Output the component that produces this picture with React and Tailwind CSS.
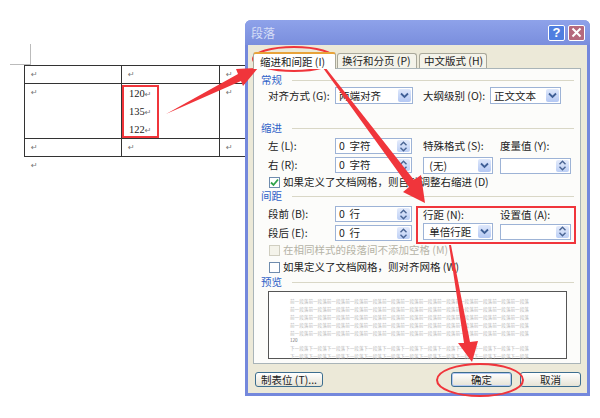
import React from "react";

function Heading({ children, className = "" }) {
  return (
    <div className={"flex items-center h-[14px] pl-[7px] pr-[6px] gap-[10px] text-[10.5px] leading-[14px] text-[#2f62c8] " + className}>
      <span className="whitespace-nowrap">{children}</span>
      <div className="flex-1 h-px bg-[#d9d7c6]" />
    </div>
  );
}

function Label({ children, w = "w-[67px]", className = "" }) {
  return <div className={"shrink-0 whitespace-nowrap text-[10.5px] leading-[14px] text-[#222] " + w + " " + className}>{children}</div>;
}

function Chevron() {
  return (
    <svg width="9" height="7" viewBox="0 0 9 7">
      <path d="M1 1.5 L4.5 5 L8 1.5" fill="none" stroke="#3f5f96" strokeWidth="1.8" />
    </svg>
  );
}

function Select({ text, w }) {
  return (
    <div className={"flex items-stretch h-[17px] bg-white border border-[#9db3d6] p-px shrink-0 " + w}>
      <div className="flex-1 pl-[2px] text-[10.5px] leading-[13px] text-[#222] whitespace-pre">{text}</div>
      <div className="w-[13px] flex items-center justify-center bg-gradient-to-b from-[#dfe8fb] to-[#b4c8f3] rounded-[2px]">
        <Chevron />
      </div>
    </div>
  );
}

function Spin({ text, w }) {
  return (
    <div className={"flex items-stretch h-[16px] bg-white border border-[#9db3d6] p-px shrink-0 " + w}>
      <div className="flex-1 pl-[2px] text-[10.5px] leading-[12px] text-[#222] whitespace-pre">{text}</div>
      <div className="w-[13px] flex flex-col items-center justify-center bg-gradient-to-b from-[#e4ebfb] to-[#bccff5] rounded-[2px]">
        <svg width="9" height="11" viewBox="0 0 9 11">
          <path d="M1.5 4.2 L4.5 1.2 L7.5 4.2 M1.5 6.8 L4.5 9.8 L7.5 6.8" fill="none" stroke="#4a6594" strokeWidth="1.4" />
        </svg>
      </div>
    </div>
  );
}

function Check({ checked, disabled, children, className = "" }) {
  return (
    <div className={"flex items-center h-[14px] pl-[15px] gap-[3px] " + className}>
      <div className={"w-[11px] h-[11px] border flex items-center justify-center shrink-0 " + (disabled ? "border-[#d0cec0] bg-[#f4f3ea]" : "border-[#6f8cae] bg-white")}>
        {checked && (
          <svg width="9" height="9" viewBox="0 0 9 9">
            <path d="M1 4.5 L3.5 7 L8 1.5" fill="none" stroke="#2fa24a" strokeWidth="1.8" />
          </svg>
        )}
      </div>
      <span className={"text-[10.5px] leading-[14px] whitespace-nowrap " + (disabled ? "text-[#b5b3a6]" : "text-[#222]")}>{children}</span>
    </div>
  );
}

function Mark() {
  return <span className="text-[8px] leading-none text-[#777] font-['DejaVu_Sans',sans-serif]">↵</span>;
}

function Cell({ children, className = "" }) {
  return <div className={"border-r border-b border-[#333] pl-[6px] pt-[4px] leading-[8px] text-[8px] " + className}>{children}</div>;
}

const before = "前一段落".repeat(13);
const after = "下一段落".repeat(13);

function PreviewLine({ text }) {
  return <div className="h-[8px] leading-[8px] text-[4.6px] text-[#b9b9b9] whitespace-nowrap">{text}</div>;
}

function Btn({ children, w, className = "" }) {
  return (
    <button className={"h-[15px] rounded-[3px] border border-[#3c6e8f] bg-gradient-to-b from-white to-[#e6e3d6] text-[10.5px] leading-[13px] text-[#222] whitespace-pre " + w + " " + className}>
      {children}
    </button>
  );
}

export default function App() {
  return (
    <div className="relative w-[600px] h-[418px] bg-white overflow-hidden font-['Noto_Sans_CJK_SC','Liberation_Sans',sans-serif]">
      {/* document */}
      <div className="pt-[65px] pl-[24px] relative">
        <div className="absolute left-[30px] top-[44px] w-px h-[21px] bg-[#bbb]" />
        <div className="absolute left-[10px] top-[64px] w-[20px] h-px bg-[#bbb]" />
        <div className="grid grid-cols-[97px_98px_60px] grid-rows-[18px_55px_18px] w-[255px] border-t border-l border-[#333]">
          <Cell><Mark /></Cell>
          <Cell><Mark /></Cell>
          <Cell><Mark /></Cell>
          <Cell><Mark /></Cell>
          <Cell className="!pt-0 !pl-0">
            <div className="relative flex flex-col font-['Liberation_Serif',serif] text-[10.5px] text-[#222] pl-[7px] pt-[1px]">
              <div className="h-[18px] leading-[18px]">120<Mark /></div>
              <div className="h-[18px] leading-[18px]">135<Mark /></div>
              <div className="h-[18px] leading-[18px]">122<Mark /></div>
              <div className="absolute left-0 top-[1px] w-[37px] h-[53px] border-2 border-[#f0353b]" />
            </div>
          </Cell>
          <Cell><Mark /></Cell>
          <Cell><Mark /></Cell>
          <Cell><Mark /></Cell>
          <Cell><Mark /></Cell>
        </div>
        <div className="pl-[7px] pt-[4px] leading-[8px] text-[8px]"><Mark /></div>
      </div>

      {/* dialog window */}
      <div className="absolute left-[245px] top-[20px] w-[345px] h-[376px] flex flex-col bg-[#ece9d8] border-x-[3px] border-b-[3px] border-[#7488dc] rounded-t-[6px]">
        <div className="h-[25px] -mx-[3px] flex items-center pl-[6px] pr-[5px] rounded-t-[6px] bg-gradient-to-b from-[#8ea2ea] to-[#7a8edd]">
          <span className="flex-1 text-[12px] text-[#d5ddf6]">段落</span>
          <div className="w-[17px] h-[16px] rounded-[2px] border border-white bg-[#4f7ee0] text-white text-[13px] leading-[14px] text-center font-['Liberation_Sans',sans-serif] font-bold">?</div>
          <div className="w-[17px] h-[16px] ml-[3px] rounded-[2px] border border-white bg-[#b5697d] flex items-center justify-center">
            <svg width="11" height="11" viewBox="0 0 11 11"><path d="M1.5 1.5 L9.5 9.5 M9.5 1.5 L1.5 9.5" stroke="#fff" strokeWidth="2" /></svg>
          </div>
        </div>

        {/* tabs */}
        <div className="flex items-end pl-[5px] pt-[7px] h-[23px] gap-[1px] text-[10.5px] text-[#222]">
          <div className="relative z-10 w-[83px] h-[17px] -mb-px bg-white border-x border-[#a9a89a] border-t-2 border-t-[#e8a33a] rounded-t-[3px] pl-[6px] leading-[15px] whitespace-nowrap">缩进和间距 (I)</div>
          <div className="w-[80px] h-[15px] bg-[#f4f3ea] border-x border-t border-[#a9a89a] rounded-t-[3px] pl-[4px] leading-[14px] whitespace-nowrap">换行和分页 (P)</div>
          <div className="w-[68px] h-[15px] ml-[1px] bg-[#f4f3ea] border-x border-t border-[#a9a89a] rounded-t-[3px] pl-[4px] leading-[14px] whitespace-nowrap">中文版式 (H)</div>
        </div>

        {/* panel */}
        <div className="ml-[5px] w-[328px] h-[296px] bg-[#fcfcfa] border border-[#a9b4b8] pt-[4px] relative">
          <Heading>常规</Heading>
          <div className="flex items-center pl-[14px]">
            <Label>对齐方式 (G):</Label>
            <Select text="两端对齐" w="w-[78px]" />
            <Label w="w-[77px]" className="pl-[10px]">大纲级别 (O):</Label>
            <Select text="正文文本" w="w-[71px]" />
          </div>

          <Heading className="mt-[17px]">缩进</Heading>
          <div className="flex pl-[14px] mt-[3px]">
            <div className="flex flex-col gap-[3px] w-[155px] shrink-0">
              <div className="flex items-center"><Label>左 (L):</Label><Spin text="0  字符" w="w-[77px]" /></div>
              <div className="flex items-center"><Label>右 (R):</Label><Spin text="0  字符" w="w-[77px]" /></div>
            </div>
            <div className="flex flex-col gap-[3px]">
              <div className="flex h-[16px] items-center"><Label w="w-[77px]">特殊格式 (S):</Label><Label w="w-[71px]">度量值 (Y):</Label></div>
              <div className="flex items-center"><div className="w-[77px]"><Select text=" (无)" w="w-[70px]" /></div><Spin text="" w="w-[71px]" /></div>
            </div>
          </div>
          <Check checked className="mt-[1px]">如果定义了文档网格，则自动调整右缩进 (D)</Check>

          <Heading>间距</Heading>
          <div className="flex pl-[14px] mt-[3px]">
            <div className="flex flex-col gap-[2px] w-[155px] shrink-0">
              <div className="flex items-center"><Label>段前 (B):</Label><Spin text="0  行" w="w-[77px]" /></div>
              <div className="flex items-center mt-[1px]"><Label>段后 (E):</Label><Spin text="0  行" w="w-[77px]" /></div>
            </div>
            <div className="flex flex-col gap-[1px]">
              <div className="flex h-[16px] items-end"><Label w="w-[77px]">行距 (N):</Label><Label w="w-[71px]">设置值 (A):</Label></div>
              <div className="flex items-center"><div className="w-[77px]"><Select text=" 单倍行距" w="w-[70px]" /></div><Spin text="" w="w-[71px]" /></div>
            </div>
          </div>
          <Check disabled className="mt-[2px]">在相同样式的段落间不添加空格 (M)</Check>
          <Check className="mt-[3px]">如果定义了文档网格，则对齐网格 (W)</Check>

          <Heading className="mt-[1px]">预览</Heading>
          <div className="ml-[14px] mt-[2px] w-[299px] h-[68px] bg-white border border-[#555] pl-[21px] pt-[5px]">
            <PreviewLine text={before} />
            <PreviewLine text={before} />
            <PreviewLine text={before} />
            <PreviewLine text={before} />
            <PreviewLine text={before} />
            <div className="h-[7px] leading-[7px] text-[4.6px] text-[#777]">120</div>
            <PreviewLine text={after} />
            <PreviewLine text={after} />
          </div>
        </div>

        {/* buttons */}
        <div className="flex pl-[7px] pr-[6px] mt-[8px]">
          <Btn w="w-[68px]">制表位 (T)...</Btn>
          <div className="flex-1" />
          <Btn w="w-[61px]" className="border-[#2f5f9e] shadow-[inset_0_0_0_1px_#b4c8f3]">确定</Btn>
          <Btn w="w-[61px]" className="ml-[8px]">取消</Btn>
        </div>
      </div>

      {/* red annotations over the picture */}
      <svg className="absolute inset-0 pointer-events-none" width="600" height="418" viewBox="0 0 600 418">
        <polygon points="166,114 238,74 236,69 258,68 243,86 241,81" fill="#f0353b" />
        <polygon points="323,68 325,67 414,180 421,175 425,203 403,192 409,187" fill="#f0353b" />
        <polygon points="449,245 451,245 470,342 478,341 472,362 458,343 464,343" fill="#f0353b" />
        <ellipse cx="294" cy="59" rx="41" ry="12" fill="none" stroke="#f0353b" strokeWidth="2" />
        <ellipse cx="480" cy="380" rx="43" ry="16" fill="none" stroke="#f0353b" strokeWidth="2" />
        <rect x="417" y="207" width="158" height="36" fill="none" stroke="#f0353b" strokeWidth="2" />
      </svg>
    </div>
  );
}
